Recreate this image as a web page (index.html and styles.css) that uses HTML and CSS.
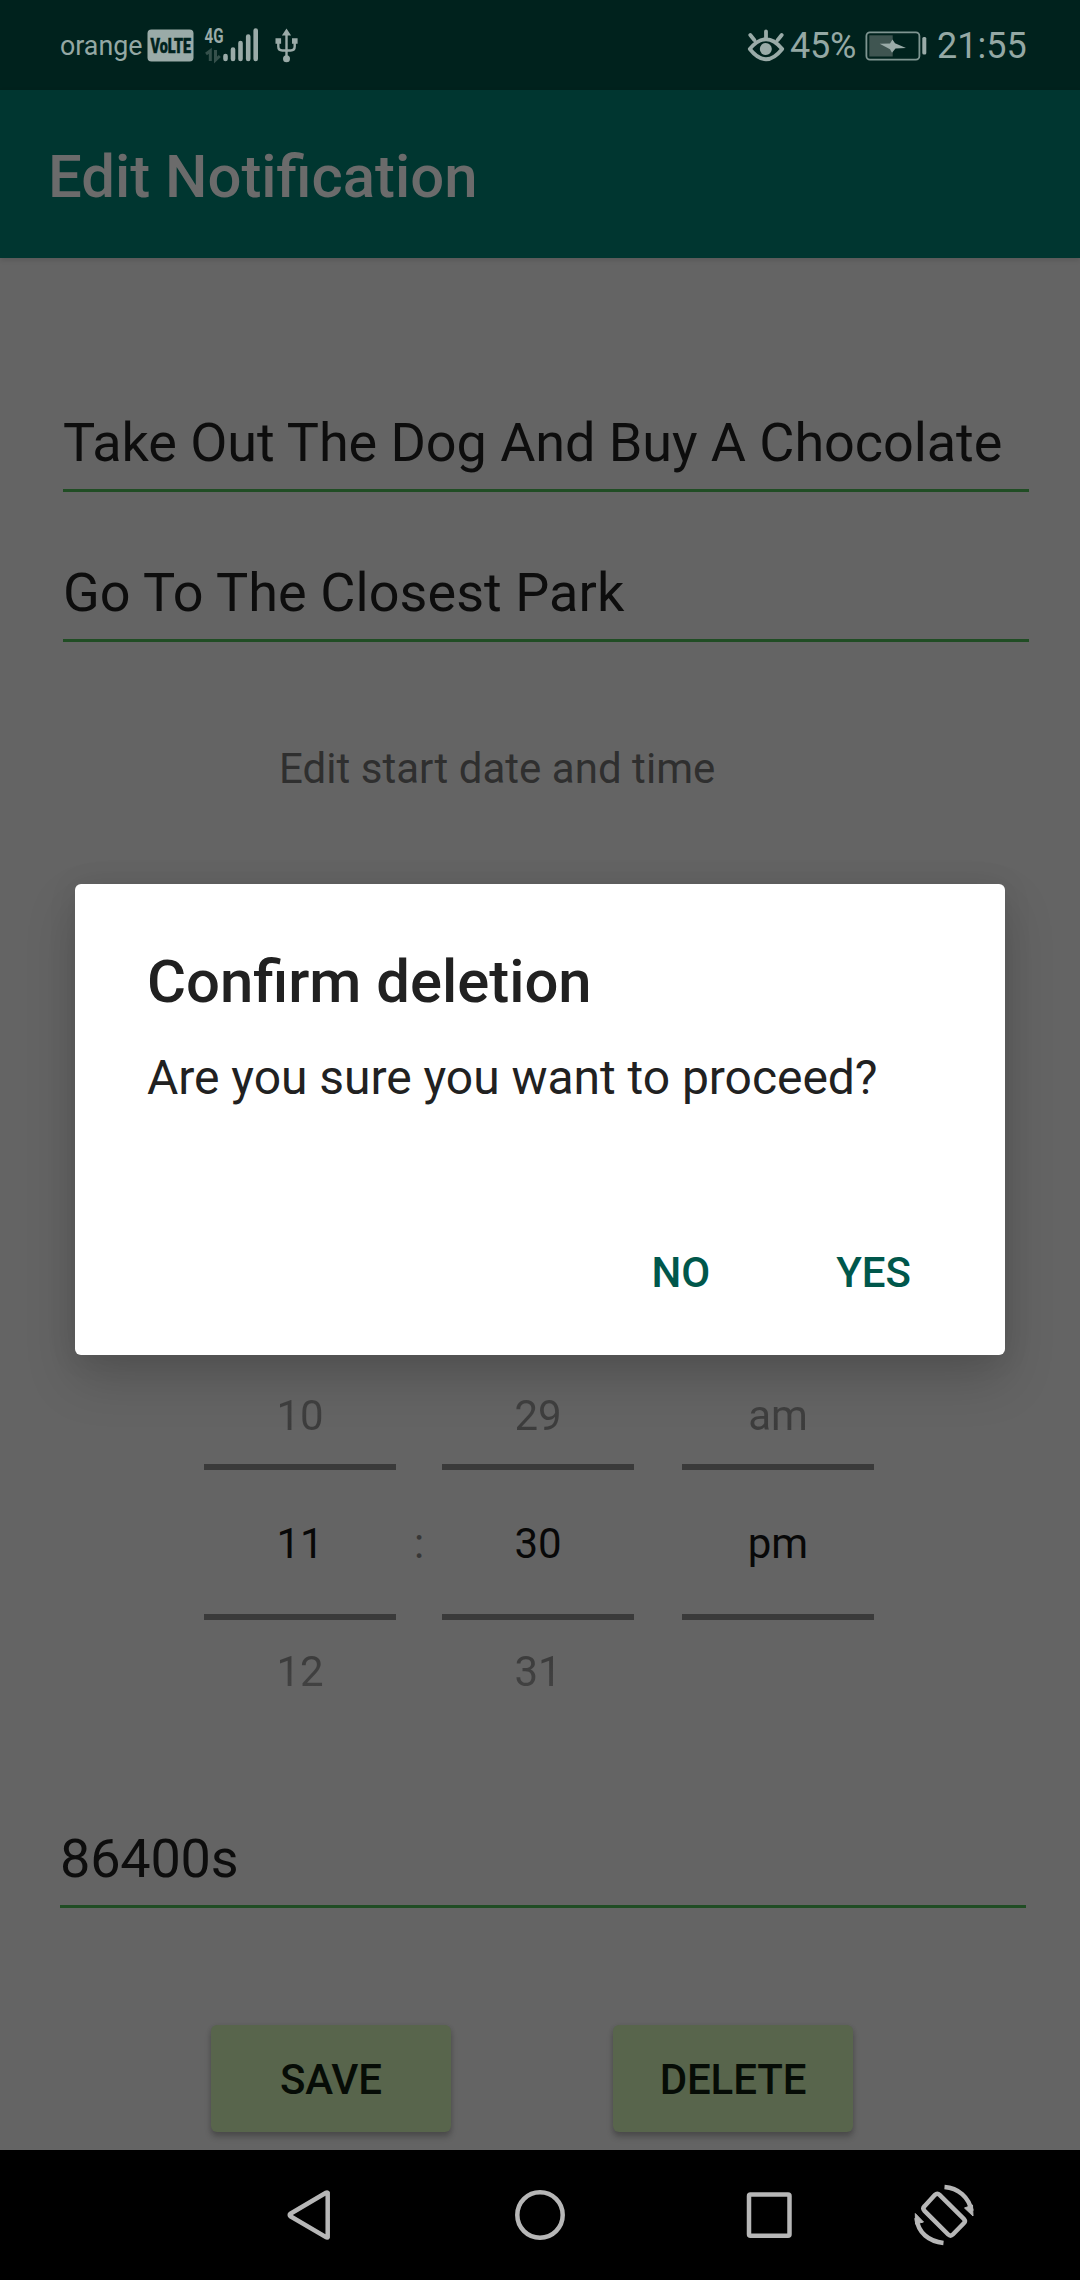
FILE: index.html
```html
<!DOCTYPE html>
<html lang="en">
<head>
<meta charset="utf-8">
<title>Edit Notification</title>
<link rel="stylesheet" href="styles.css">
</head>
<body>
<div class="screen">
  <header class="status">
    <span class="carrier">orange</span>
    <svg class="status-left" width="154" height="44" viewBox="147 24 154 44">
      <rect class="ink" x="147.500" y="29.500" width="46" height="32" rx="4"/>
      <text class="badge-text" transform="translate(150.500 52.700) scale(.65 1)" textLength="62.300" lengthAdjust="spacingAndGlyphs">VoLTE</text>
      <text class="net-text" transform="translate(204.500 42.700) scale(.75 1)" textLength="25.300" lengthAdjust="spacingAndGlyphs">4G</text>
      <g class="dim-line"><path d="M206 54l4.300-3.300V61M215.500 50v10l4.300-4"/></g>
      <g class="bars"><path d="M225.500 56v3M233 49.500V59M240.500 43V59M248.200 36.500V59M255.700 30.500V59"/></g>
      <g class="usb">
        <path d="M286.500 34V58M278.300 42v4.500q0 4 4 4h8.400q4 0 4-4V42"/>
        <path class="ink" stroke="none" d="M286.500 28.500l4.600 7h-9.200zM275.500 38.300h5.600v5.400h-5.600zM292 38.300h5.600v5.400h-5.600z"/>
        <circle class="ink" stroke="none" cx="286.500" cy="58.800" r="3.500"/>
      </g>
    </svg>
    <span class="spacer"></span>
    <svg class="eye" width="38" height="36" viewBox="747 28 38 36">
      <path d="M749.800 49Q766 29.500 782.200 49Q766 69.500 749.800 49zM766 31.500V38M750.300 35l4 5M781.700 35l-4 5"/>
      <circle class="ink" stroke="none" cx="765.800" cy="49" r="6"/>
    </svg>
    <span class="percent">45%</span>
    <svg class="battery" width="62" height="30" viewBox="865 30.700 62 30">
      <rect class="case" x="866.400" y="32.100" width="53" height="27.200" rx="3.500"/>
      <rect class="level" x="869.300" y="35" width="23.400" height="21.200"/>
      <path class="ink" d="M879.700 43.500L890 43.200 892.500 39.300 895 43 906 47.600 895.500 48.300 892 52.500 890 49z"/>
      <rect class="ink" x="922.300" y="36.700" width="4" height="17.500" rx="1.500"/>
    </svg>
    <span class="clock">21:55</span>
  </header>

  <div class="appbar"><h1>Edit Notification</h1></div>

  <main class="form">
    <div class="field first">Take Out The Dog And Buy A Chocolate</div>
    <div class="field second">Go To The Closest Park</div>
    <div class="label">Edit start date and time</div>
    <div class="picker">
      <div class="wheel"><span class="prev">10</span><span class="current">11</span><span class="next">12</span></div>
      <span class="colon">:</span>
      <div class="wheel"><span class="prev">29</span><span class="current">30</span><span class="next">31</span></div>
      <div class="wheel period"><span class="prev">am</span><span class="current">pm</span><span class="next"></span></div>
    </div>
    <div class="field interval">86400s</div>
    <div class="actions">
      <button class="action">SAVE</button>
      <button class="action">DELETE</button>
    </div>
  </main>

  <nav class="navbar">
    <svg width="1080" height="130" viewBox="0 2150 1080 130">
      <path d="M327.700 2192.800V2237.200Q327.300 2238 326 2237.200L290.400 2216.200Q289 2215 290.400 2213.800L326 2192.800Q327.300 2192 327.700 2192.800z"/>
      <circle cx="540" cy="2215" r="22.700"/>
      <rect x="749" y="2194.500" width="40.500" height="41.200" rx="1.500"/>
      <path d="M935 2194.800Q937.300 2192.500 939.600 2194.800L963.800 2218.800Q966 2221 963.800 2223.300L952.800 2234.500Q950.500 2236.800 948.200 2234.500L924.500 2210.800Q922.200 2208.500 924.500 2206.200z"/>
      <path d="M944.500 2187C958 2188 969 2197 971.500 2211M943.500 2243C929 2241.500 918 2233 916.500 2218"/>
      <path class="head" d="M973 2216L964.500 2208 972.500 2205zM915.300 2213.500L923.500 2222 915.500 2224z"/>
    </svg>
  </nav>

  <section class="dialog" role="dialog">
    <h2>Confirm deletion</h2>
    <p>Are you sure you want to proceed?</p>
    <div class="choices"><button>NO</button><button>YES</button></div>
  </section>
</div>
</body>
</html>
```
FILE: styles.css
```css
* { box-sizing: border-box; }
body, h1, h2, p { margin: 0; }
body { background: #000; font-family: Roboto, sans-serif; }
button { border: 0; padding: 0; background: none; font: 500 42px Roboto, sans-serif; }
svg { display: block; flex: none; }

.screen {
  position: relative;
  display: flex;
  flex-direction: column;
  width: 1080px;
  height: 2280px;
  overflow: hidden;
  background: #646464;
}

.status {
  display: flex;
  align-items: center;
  height: 90px;
  padding: 2px 53px 0 60px;
  background: #00221d;
  color: #94a8a4;
  white-space: nowrap;
}
.ink { fill: #9aaba8; }
.carrier { width: 87px; font-size: 26.800px; }
.spacer { flex: 1; }
.badge-text { font: 900 21px Roboto, sans-serif; fill: #00221d; stroke: #00221d; stroke-width: .6px; }
.net-text { font: 700 20px Roboto, sans-serif; fill: #9aaba8; }
.dim-line { fill: none; stroke: #35504b; stroke-width: 3; }
.bars { fill: none; stroke: #9aaba8; stroke-width: 4.6; stroke-linecap: round; }
.usb { fill: none; stroke: #9aaba8; stroke-width: 2.4; }
.eye { fill: none; stroke: #9aaba8; stroke-width: 3.8; stroke-linecap: round; stroke-linejoin: round; }
.percent { width: 80px; padding-left: 5px; font-size: 36px; letter-spacing: -.2px; }
.case { fill: none; stroke: #7f9591; stroke-width: 1.8; }
.level { fill: #3f5551; }
.clock { width: 100px; padding-left: 10px; font-size: 36px; }

.appbar {
  display: flex;
  align-items: center;
  height: 168px;
  padding: 5px 48px 0;
  background: #003630;
  color: #6b6b6b;
  box-shadow: 0 2px 5px rgba(0, 0, 0, .12);
}
h1 { font-size: 59.850px; font-weight: 500; }

.form { height: 1892px; padding: 150px 51px 0 63px; }
.field {
  width: 966px;
  height: 84px;
  border-bottom: 3px solid #204d24;
  color: #0d0d0d;
  font-size: 54px;
  line-height: 69px;
  white-space: nowrap;
}
.first { letter-spacing: -.07px; }
.second { margin-top: 66px; letter-spacing: .06px; }
.label {
  margin: 102px 0 0 216px;
  color: #2f2f2f;
  font-size: 42px;
  line-height: 50px;
  letter-spacing: .04px;
}
.picker { display: flex; margin: 574px 0 0 141px; font-size: 42px; text-align: center; }
.wheel { display: grid; grid-template-rows: 96px 156px 104px; width: 192px; }
.prev { line-height: 96px; background: linear-gradient(#444, #383838) text; color: transparent; }
.current {
  padding-top: 2px;
  border-top: 6px solid #3a3a3a;
  border-bottom: 6px solid #3a3a3a;
  color: #080808;
  line-height: 144px;
}
.next { line-height: 104px; background: linear-gradient(#363636, #484848) text; color: transparent; }
.colon { width: 46px; padding-top: 96px; color: #373737; line-height: 160px; }
.period { margin-left: 48px; }
.interval { margin: 100px 0 0 -3px; letter-spacing: -.2px; }
.actions { display: flex; gap: 162px; margin: 117px 0 0 148px; }
.action {
  width: 240px;
  height: 107px;
  padding-top: 2px;
  border-radius: 6px;
  background: #58654c;
  color: #060c06;
  letter-spacing: -.1px;
  box-shadow: 0 5px 6px rgba(0, 0, 0, .22), 0 1px 5px rgba(0, 0, 0, .1);
}

.navbar { height: 130px; background: #000; }
.navbar svg { fill: none; stroke: #b7b7b7; stroke-width: 4.5; stroke-linejoin: round; stroke-linecap: butt; }
.navbar .head { fill: #b7b7b7; stroke-width: 1; }

.dialog {
  position: absolute;
  left: 75px;
  top: 884px;
  width: 930px;
  height: 471px;
  padding: 64px 94px 0 72px;
  border-radius: 6px;
  background: #fff;
  color: #212121;
  box-shadow: 0 24px 50px rgba(0, 0, 0, .17), 0 2px 30px rgba(0, 0, 0, .08);
}
h2 { font-size: 59.800px; font-weight: 500; line-height: 68px; }
.dialog p { margin-top: 34px; font-size: 48px; line-height: 56px; letter-spacing: -.04px; white-space: nowrap; }
.choices { display: flex; justify-content: flex-end; gap: 126px; margin-top: 142px; }
.choices button { color: #00574b; line-height: 50px; }
```
